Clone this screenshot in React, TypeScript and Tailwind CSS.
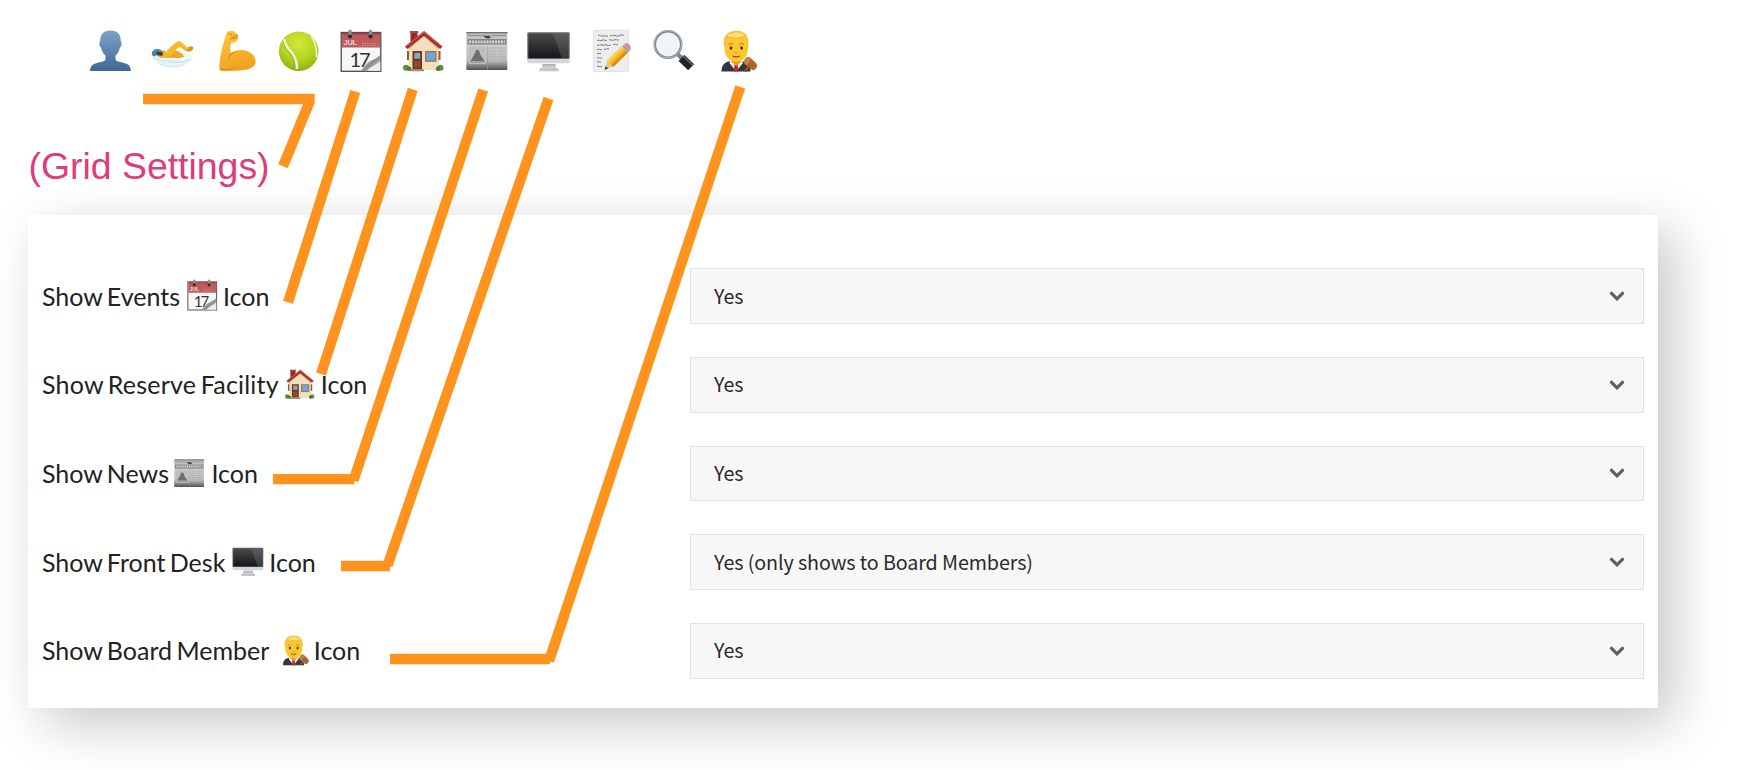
import { ReactNode } from "react";
import clsx from "clsx";

type IconProps = { className?: string };

function Emoji({ className, children }: IconProps & { children: ReactNode }) {
  return (
    <svg
      viewBox="0 0 42 42"
      className={clsx("block shrink-0 overflow-visible", className)}
      aria-hidden="true"
    >
      {children}
    </svg>
  );
}

function PersonIcon({ className }: IconProps) {
  return (
    <Emoji className={className}>
      <defs>
        <linearGradient id="person" x1="0" y1="0" x2="0" y2="1">
          <stop offset="0" stopColor="#7ba3c9" />
          <stop offset="1" stopColor="#3f6795" />
        </linearGradient>
      </defs>
      <path
        d="M20.500.5C13 .5 10 5 10.200 11.500c-1.400.3-1 5 .9 6 .6 3.600 2 6 4.400 8.200v4c-1.500 2-5 2.300-8.500 3.200C2.500 34 .3 36 .1 41h40.800c-.2-5-2.400-7-6.900-8.100-3.500-.9-7-1.200-8.500-3.200v-4c2.400-2.200 3.800-4.600 4.400-8.200 1.900-1 2.300-5.700.9-6C31 5 28 .5 20.500.5z"
        fill="url(#person)"
      />
    </Emoji>
  );
}

function SwimmerIcon({ className }: IconProps) {
  return (
    <Emoji className={className}>
      <path d="M1 27c6-4 32-5 39-1 2 2-2 6-7 8.500-8 4-20 4-27-2C2.500 30 0 28 1 27z" fill="#e9f2f8" />
      <path
        d="M12 27c2-7 9-12.500 13.500-15.500 1.500-.9 2.600-.6 3.600.4l6 5.400 4.800-1c2 .5 1.800 3-.3 4.500-2.500 1.200-5.600.7-7.600-.8L27.500 17 23 20.500c4 .8 8 3 9 6.500-5 2.300-16 2.500-20 0z"
        fill="#f9b92b"
      />
      <path d="M23 20.500c4 .8 8 3 9 6.500-5 2.300-16 2.500-20 0 5 0 8.500-2 11-6.500z" fill="#eb9a1e" opacity=".6" />
      <path d="M37 17l3-.6c2 .5 1.500 2.900-.4 4.400-2 1-4.500.8-6.600 0 2.500-.3 4-1.600 4-3.800z" fill="#c97a18" opacity=".55" />
      <ellipse cx="9.800" cy="24" rx="4.800" ry="4" fill="#f4b02b" />
      <path d="M-.3 23.500C0 19.500 4.500 18 8.500 19.700l1.300 2.300-7 4.300c-1.800.2-3.100-.8-3.100-2.800z" fill="#4785ad" />
      <path d="M4 22l7 .3-.6 3.400-5.200-.5z" fill="#3a3a3c" />
      <path d="M3 29.500c6 2 10-1.500 17-.8s12 .8 18-1.700" fill="none" stroke="#fff" strokeWidth="2" />
      <path d="M1 27c5 5 11 2 17 4s14 1.500 20-2" fill="none" stroke="#bedbea" strokeWidth="1" />
      <path d="M6 33c6 4 18 5.500 27 1" fill="none" stroke="#d2e5f0" strokeWidth="1.200" />
    </Emoji>
  );
}

function BicepsIcon({ className }: IconProps) {
  return (
    <Emoji className={className}>
      <defs>
        <linearGradient id="biceps" x1="0" y1="0" x2="0.300" y2="1">
          <stop offset="0" stopColor="#fdc93f" />
          <stop offset="1" stopColor="#f3a21f" />
        </linearGradient>
      </defs>
      <path
        d="M12 2.500C13.500.7 17 .3 19 1.500c2 1.500 3.800 3 4.300 5 .6 2-1 4.200-3 5.200-1.500.8-3.500 1.300-4.500 1.500-.5 3.500-.5 7-.2 10 2.500-2 6.500-3.200 10.500-3.200 8 0 14.500 5 14.500 11.500C40.600 38 33 40 24 40.500c-7 .5-13.500 1-18 .3-1.300-.3-1.800-1.300-1.700-2.800C4.500 30 6.500 18 9 12c.5-3.500 1.500-7 3-9.500z"
        fill="url(#biceps)"
      />
      <path d="M16 22.800c-2 1.800-3 4.500-2.700 8.200 1.500-4 4-7 8-9.500" fill="#dd8815" opacity=".75" />
      <path d="M5 38.800c5 1.500 12 .3 18-2.500" fill="none" stroke="#dc8b1c" strokeWidth="1" />
      <path d="M13.500 4c2-1.500 3.500.3 3 1.500s1.500 2 3 .5 2.300-2 2.600-.5-1 3-2.500 3-3-.5-4.500.5" fill="none" stroke="#c87b18" strokeWidth="1" />
    </Emoji>
  );
}

function TennisIcon({ className }: IconProps) {
  return (
    <Emoji className={className}>
      <defs>
        <radialGradient id="tennis" cx=".5" cy=".3" r=".7">
          <stop offset="0" stopColor="#d2e83c" />
          <stop offset=".6" stopColor="#b4d41f" />
          <stop offset="1" stopColor="#8cb014" />
        </radialGradient>
      </defs>
      <circle cx="20.700" cy="21.200" r="19.800" fill="url(#tennis)" />
      <path d="M6.200 9.500c.5 5 3.500 9 7.500 14 3 4 5 10 4.800 15.500" fill="none" stroke="#8fb01a" strokeWidth="3.600" />
      <path d="M6.200 9c.5 5 3.500 9 7.500 13.500 3 4 5.500 11 5.300 16.500" fill="none" stroke="#edf3cd" strokeWidth="2.700" />
      <path d="M33.200 6.500c4 5 5.500 13 5.500 21" fill="none" stroke="#edf3cd" strokeWidth="1.800" />
    </Emoji>
  );
}

function CalendarIcon({ className }: IconProps) {
  return (
    <Emoji className={className}>
      <defs>
        <linearGradient id="curl" x1="0" y1="0" x2="1" y2="1">
          <stop offset="0" stopColor="#f5f5f5" />
          <stop offset=".55" stopColor="#8c8c8c" />
          <stop offset="1" stopColor="#f0f0f0" />
        </linearGradient>
      </defs>
      <rect x="1.200" y="2.500" width="39.600" height="38.800" fill="#f5f6f6" stroke="#4c4c4e" strokeWidth="1.300" />
      <rect x="1.800" y="3" width="38.400" height="14.500" fill="#bf5a5e" />
      <rect x="1.800" y="3" width="38.400" height="2" fill="#a8474c" />
      <text x="3.600" y="15" fill="#f1d4d4" className="font-['Liberation_Sans'] text-[7.500px] font-bold" textLength="13.500">
        JUL
      </text>
      <path d="M22 15.500h16M22 13.500h16" stroke="#dba0a2" strokeWidth=".8" strokeDasharray="1.500 1" />
      <text x="9.500" y="36.800" fill="#303234" className="font-['Lato'] text-[20px]" textLength="21">
        17
      </text>
      <path d="M40.200 25c-4 4-8 5-11 6.500-3 2-5 6-8.500 9.200h19.500z" fill="url(#curl)" />
      <path d="M40.200 31c-3 3-10 6-13 9.700h13z" fill="#eceded" />
      <path d="M10 1v5M30.500 1v5" stroke="#8d8e90" strokeWidth="3.200" strokeLinecap="round" />
      <circle cx="10" cy="6.500" r="2.100" fill="#2c2d2f" />
      <circle cx="30.500" cy="6.500" r="2.100" fill="#2c2d2f" />
    </Emoji>
  );
}

function HouseIcon({ className }: IconProps) {
  return (
    <Emoji className={className}>
      <rect x="7.500" y="1.800" width="7" height="13" fill="#8f2b2a" />
      <rect x="6.800" y="1" width="8.400" height="2.200" fill="#b44744" />
      <path d="M5.500 18L20.500 4.500 36 18v22H5.500z" fill="#f3dfbb" />
      <path d="M5.500 20L20.500 6.500 36 20v-3L20.500 4.500 5.500 16z" fill="#b99a72" opacity=".6" />
      <path d="M21 1L2 16.500l2.200 2.500L21 5.700 37.200 19l2.300-2.600z" fill="#a82c2d" />
      <path d="M21 1L2 16.500l.7.8L21 2.800l18 14.400.5-.8z" fill="#cf5a54" />
      <rect x="4" y="21" width="2" height="9" fill="#8a5a3a" />
      <rect x="35.500" y="21" width="2" height="9" fill="#8a5a3a" />
      <rect x="9.500" y="21" width="9.500" height="18.500" fill="#71351f" />
      <rect x="11.300" y="22.800" width="5.900" height="6" fill="#7fa9cc" />
      <path d="M11.500 31h2.500v6.500h-2.500zM14.800 31h2.400v6.500h-2.400z" fill="#95502f" />
      <rect x="22" y="21" width="11.500" height="10.800" fill="#a9714a" />
      <rect x="23.300" y="22.300" width="8.900" height="8.200" fill="#6aa8dc" />
      <circle cx="3" cy="37.800" r="3" fill="#5d8f3e" />
      <circle cx="6" cy="38.700" r="2.300" fill="#437d2a" />
      <circle cx="37.500" cy="37.800" r="3" fill="#5d8f3e" />
      <circle cx="35" cy="38.700" r="2.200" fill="#437d2a" />
      <path d="M7.500 39h13l1 2.300h-15z" fill="#a98a76" />
    </Emoji>
  );
}

function NewspaperIcon({ className }: IconProps) {
  return (
    <Emoji className={className}>
      <defs>
        <linearGradient id="paper" x1="0" y1="0" x2="0" y2="1">
          <stop offset="0" stopColor="#b4b4b4" />
          <stop offset=".3" stopColor="#cfcfcf" />
          <stop offset=".75" stopColor="#bdbdbd" />
          <stop offset="1" stopColor="#505050" />
        </linearGradient>
      </defs>
      <rect x=".3" y="2" width="41" height="38" rx=".8" fill="url(#paper)" />
      <path d="M.5 2.600h41" stroke="#707070" strokeWidth="1.300" />
      <path d="M2 5.500h15M25 5.500h15" stroke="#929292" strokeWidth="1" />
      <path d="M17 5l3 1 3-.5 2 2-2.500 1-3-.5z" fill="#404040" />
      <rect x="1.500" y="9" width="39" height="5.600" fill="#858585" />
      <path d="M3 11.800h36" stroke="#d2d2d2" strokeWidth="2.800" strokeDasharray="2 .9" />
      <rect x="3" y="16.500" width="17" height="17.500" fill="#bebebe" />
      <path d="M4.500 31l4-7 1.500-4 3 .2L14.500 25l4 6z" fill="#707070" />
      <path d="M4 32h15" stroke="#8d8d8d" strokeWidth="1.200" />
      <path d="M22.500 18h17M22.500 21h8M22.500 24h8M22.500 27h8M32 21h7.500M32 24h7.500M32 27h7.500M22.500 30h8M32 30h7.500" stroke="#aaa" strokeWidth=".9" />
      <path d="M21.500 16v24" stroke="#999" strokeWidth=".6" />
    </Emoji>
  );
}

function DesktopIcon({ className }: IconProps) {
  return (
    <Emoji className={className}>
      <defs>
        <linearGradient id="screen" x1="0" y1="0" x2="0" y2="1">
          <stop offset="0" stopColor="#4a4b4d" />
          <stop offset="1" stopColor="#141516" />
        </linearGradient>
        <linearGradient id="stand" x1="0" y1="0" x2="0" y2="1">
          <stop offset="0" stopColor="#a8aaad" />
          <stop offset="1" stopColor="#dddfe2" />
        </linearGradient>
      </defs>
      <path d="M14.500 34h13l.8 4.500H13.700z" fill="url(#stand)" />
      <path d="M12 38h18l1 3.200H11z" fill="#c3c6ca" />
      <rect x="-.7" y="2.300" width="42.400" height="31" rx="1.400" fill="#d4d6d9" />
      <path d="M.8 2.300h39.500q1.400 0 1.400 1.400v24.800H-.7V3.700Q-.7 2.300.8 2.300z" fill="#6f7173" />
      <rect x=".4" y="3.400" width="40.200" height="25" fill="url(#screen)" />
      <path d="M25 3.400h15.600v25H34z" fill="#8b8d8f" opacity=".28" />
    </Emoji>
  );
}

function MemoIcon({ className }: IconProps) {
  return (
    <Emoji className={className}>
      <rect x="2.700" y=".2" width="34.600" height="41.300" fill="#eceded" stroke="#dcdcdc" strokeWidth=".7" />
      <path
        d="M7 6c2-2 3 1 5 0s3 1 5 0M19 5.500c2 .8 3-.8 5 0s3 1 5-.2 3 .4 4 0M6 10.500c2-1 3 1 5-.2s3 .8 5 0M18 10c2-.8 3 1 5 0s3 .5 5-.2M6 15c2 1 3-1 5 0s3-1 5 0 3 .4 4-.3M22 14.500c2-.8 3 .6 5 0M6 19.500c2-1 3 .8 5 0M13 19c2 .8 3-.8 5 0M6 23.500c2 .6 2-.6 4 0M6 28c2-1 3 1 5 0M6 32c2-1 3 1 4 0M6 36.500c2-1 3 1 5 0"
        fill="none"
        stroke="#747678"
        strokeWidth="1"
      />
      <path d="M13.500 39.800l2.800-9.300 6.200 5.800z" fill="#e8c48e" />
      <path d="M13.500 39.800l1.200-3.600 2.500 2.200z" fill="#2d2d2f" />
      <path d="M16 30.500l15-14.200 5.800 6.200L22.500 36.800z" fill="#f7b51d" />
      <path d="M16 30.500l15-14.200 1.800 2L18 32.500z" fill="#fbd257" />
      <path d="M20.300 34.900l14.600-14.500 1.900 2.100-14.300 14.300z" fill="#da8d14" />
      <path d="M31 16.300l2.200-2 5.800 6.100-2.200 2.100z" fill="#a3a7aa" />
      <path d="M33.200 14.300c1.500-1.500 3.300-1.300 4.800.2s2.500 4 1 5.900z" fill="#e7828d" />
    </Emoji>
  );
}

function MagnifierIcon({ className }: IconProps) {
  return (
    <Emoji className={className}>
      <path d="M24 24.500l4 4" stroke="#7d8288" strokeWidth="4" />
      <circle cx="14" cy="14.500" r="13.200" fill="#f1f4f7" stroke="#7b8188" strokeWidth="2.600" />
      <circle cx="14" cy="14.200" r="13.700" fill="none" stroke="#c5cad0" strokeWidth=".8" />
      <path d="M27.500 28l9.600 9.300" stroke="#212325" strokeWidth="8.500" />
      <path d="M29 26l9.500 9" stroke="#686b6e" strokeWidth="1.500" strokeLinecap="round" />
    </Emoji>
  );
}

function JudgeIcon({ className }: IconProps) {
  return (
    <Emoji className={className}>
      <path d="M5.500 41.500c0-6 2.500-9 8-10.200h13c5.500 1.200 8 4.200 8 10.200z" fill="#35363b" />
      <path d="M14.500 30h11l1.500 3-7 8.500-6.500-8.500z" fill="#f3f4f5" />
      <path d="M18.500 34.500h3.200l.8 7h-4.800z" fill="#c4293c" />
      <path d="M15.500 27h9.500v5l-4.800 4-4.700-4z" fill="#e79e20" />
      <path d="M8.500 12C8.500 5 13 2 20.200 2S32 5 32 12c0 4 .5 8-1 12-2 5-6.500 8-10.800 8S11.500 29 9.500 24c-1.500-4-1-8-1-12z" fill="#fcc62f" />
      <path d="M8 17C6.500 7 10 1 20.500.8 30 .8 33.500 7 32.300 17l-1.300-3c0-2-.5-3.500-1.500-5-6 1.500-12.500 1-17-1.500C10.500 9.500 10 12 9.500 14z" fill="#f3c33e" />
      <path d="M11 6C15 1.500 25 1 29 6c-6 1.500-12 1.500-18 0z" fill="#fbe07a" />
      <path d="M12.500 14.500q2.500-1.500 4.500-.3M23.500 14.200q2.500-1.200 4.500.3" stroke="#b4771a" strokeWidth="1" fill="none" />
      <ellipse cx="15" cy="18" rx="1.400" ry="1.800" fill="#49321c" />
      <ellipse cx="25.600" cy="18" rx="1.400" ry="1.800" fill="#49321c" />
      <path d="M19 22.500q1.300 1 2.600 0" stroke="#d98d1c" fill="none" />
      <path d="M16.500 26q3.800 1.600 7.500 0" stroke="#935119" strokeWidth="1.300" fill="none" />
      <path d="M29 41.500l5-7" stroke="#8a4e24" strokeWidth="2.500" />
      <path d="M28.500 30c1-2.500 3-3.500 5-3l7 6.500c1.300 2.500 0 5-2 6.300-1.500.5-3 0-4.300-1.300l-5-4c-1-1.300-1.300-3-.7-4.500z" fill="#a9642f" />
      <path d="M28.500 30c1-2.500 3-3.500 5-3l1.700 1.700-3.700 6-2.300-.2c-1-1.300-1.300-3-.7-4.500z" fill="#c4824a" />
    </Emoji>
  );
}

const toolbar = [
  PersonIcon,
  SwimmerIcon,
  BicepsIcon,
  TennisIcon,
  CalendarIcon,
  HouseIcon,
  NewspaperIcon,
  DesktopIcon,
  MemoIcon,
  MagnifierIcon,
  JudgeIcon,
];

const settings = [
  { label: "Show Events", Icon: CalendarIcon, spacing: "ml-[7px] mr-[5.5px]", value: "Yes" },
  {
    label: "Show Reserve Facility",
    Icon: HouseIcon,
    spacing: "ml-[6.5px] mr-[5px]",
    tracking: "tracking-[0.2px]",
    value: "Yes",
  },
  { label: "Show News", Icon: NewspaperIcon, spacing: "ml-[5.5px] mr-[6.5px]", value: "Yes" },
  {
    label: "Show Front Desk",
    Icon: DesktopIcon,
    spacing: "ml-[8px] mr-[5.5px]",
    value: "Yes (only shows to Board Members)",
  },
  { label: "Show Board Member", Icon: JudgeIcon, spacing: "ml-[10px] mr-[4px]", value: "Yes" },
];

// Pointers from the toolbar icons to the setting that toggles each of them
function Connectors() {
  return (
    <svg
      viewBox="0 0 1742 770"
      className="pointer-events-none absolute inset-0 h-[770px] w-[1742px]"
      fill="none"
      stroke="#ff931e"
      strokeWidth="10.300"
    >
      <path d="M143 99h171.600M309.700 101.500L283 166.300" />
      <path d="M355.300 91.500L288 302.300" />
      <path d="M412.800 89.300L321 374" />
      <path d="M483.200 90L353.500 480.500M273 479.200h81.500" />
      <path d="M548.500 98.500L387.500 565.500M341 566h49" />
      <path d="M740.300 86.800L549 661M390 659h160" />
    </svg>
  );
}

export default function App() {
  return (
    <div className="relative h-[770px] w-[1742px] overflow-hidden bg-white">
      <div className="flex gap-[20.7px] pt-[30px] pl-[89.5px]">
        {toolbar.map((Icon, i) => (
          <Icon key={i} className="size-[42px]" />
        ))}
      </div>

      <h1 className="mt-[72px] ml-[28.5px] font-['Liberation_Sans',sans-serif] text-[37.4px] leading-[44px] text-[#dd3d79]">
        (Grid Settings)
      </h1>

      <section className="mt-[27px] ml-[28px] grid h-[493px] w-[1630px] content-start gap-[33px] bg-white pt-[53.3px] pr-[14px] pl-[14px] shadow-[16px_16px_50px_rgba(0,0,0,0.22)]">
        {settings.map(({ label, Icon, spacing, tracking, value }) => (
          <div key={label} className="flex h-[55.67px] items-center">
            <div className="flex w-[648px] items-center pb-px font-['Lato',sans-serif] text-[25px] leading-[30px] whitespace-nowrap text-[#222]">
              <span className={clsx("[word-spacing:-2px]", tracking)}>{label}</span>
              <Icon className={clsx("size-[30.5px]", spacing)} />
              <span>Icon</span>
            </div>
            <div className="flex h-full flex-1 items-center justify-between border-[1.5px] border-[#e2e2e2] bg-[#f7f7f7] pr-[18.5px] pl-[23px]">
              <span className="pb-px font-['Noto_Sans_CJK_SC',sans-serif] text-[19.7px] leading-[30px] tracking-[-0.1px] text-[#2b2b2b]">
                {value}
              </span>
              <svg
                viewBox="0 0 16 10"
                className="h-[10px] w-[16px]"
                fill="none"
                stroke="#5f5f5f"
                strokeWidth="3.200"
              >
                <path d="M2.500 2.300l5.500 5.500 5.500-5.500" strokeLinecap="round" />
              </svg>
            </div>
          </div>
        ))}
      </section>

      <Connectors />
    </div>
  );
}
